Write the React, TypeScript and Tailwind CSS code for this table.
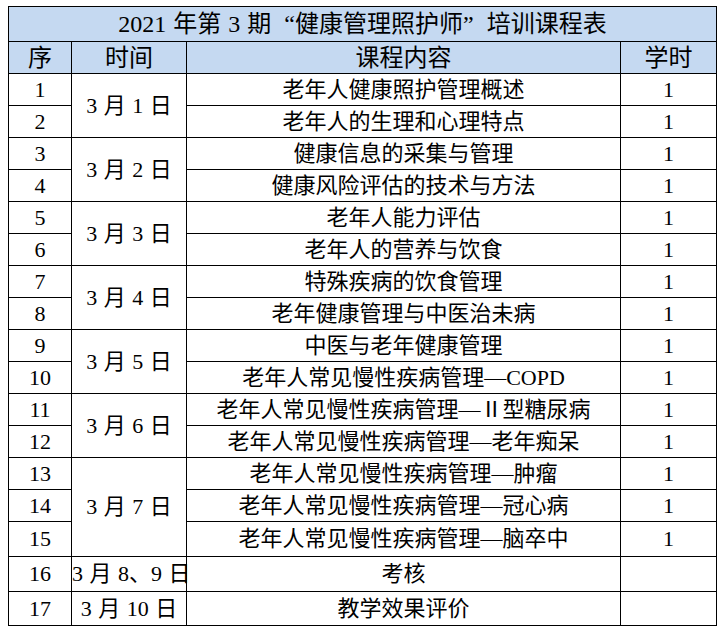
import React from 'react';

type Row = { no: number; date?: string; span?: number; course: string; hours: string; h: string };

const rows: Row[] = [
  { no: 1, date: '3 月 1 日', span: 2, course: '老年人健康照护管理概述', hours: '1', h: 'h-[32px]' },
  { no: 2, course: '老年人的生理和心理特点', hours: '1', h: 'h-[32px]' },
  { no: 3, date: '3 月 2 日', span: 2, course: '健康信息的采集与管理', hours: '1', h: 'h-[32px]' },
  { no: 4, course: '健康风险评估的技术与方法', hours: '1', h: 'h-[32px]' },
  { no: 5, date: '3 月 3 日', span: 2, course: '老年人能力评估', hours: '1', h: 'h-[32px]' },
  { no: 6, course: '老年人的营养与饮食', hours: '1', h: 'h-[32px]' },
  { no: 7, date: '3 月 4 日', span: 2, course: '特殊疾病的饮食管理', hours: '1', h: 'h-[32px]' },
  { no: 8, course: '老年健康管理与中医治未病', hours: '1', h: 'h-[32px]' },
  { no: 9, date: '3 月 5 日', span: 2, course: '中医与老年健康管理', hours: '1', h: 'h-[32px]' },
  { no: 10, course: '老年人常见慢性疾病管理—COPD', hours: '1', h: 'h-[32px]' },
  { no: 11, date: '3 月 6 日', span: 2, course: '老年人常见慢性疾病管理—Ⅱ型糖尿病', hours: '1', h: 'h-[32px]' },
  { no: 12, course: '老年人常见慢性疾病管理—老年痴呆', hours: '1', h: 'h-[32px]' },
  { no: 13, date: '3 月 7 日', span: 3, course: '老年人常见慢性疾病管理—肿瘤', hours: '1', h: 'h-[32px]' },
  { no: 14, course: '老年人常见慢性疾病管理—冠心病', hours: '1', h: 'h-[32px]' },
  { no: 15, course: '老年人常见慢性疾病管理—脑卒中', hours: '1', h: 'h-[35px]' },
  { no: 16, date: '3 月 8、9 日', span: 1, course: '考核', hours: '', h: 'h-[35px]' },
  { no: 17, date: '3 月 10 日', span: 1, course: '教学效果评价', hours: '', h: 'h-[34px]' },
];

const cell = 'border border-black text-center align-middle p-0 leading-none';
const head = `${cell} font-normal text-[24px]`;

export default function App() {
  return (
    <div className="w-[723px] h-[633px] bg-white pt-[6px] pl-[8px] text-black text-[22px] [word-spacing:1px] font-['Liberation_Serif','Noto_Sans_CJK_SC',serif]">
      <table className="table-fixed border-collapse w-[708px]">
        <colgroup>
          <col className="w-[63px]" />
          <col className="w-[115px]" />
          <col className="w-[434px]" />
          <col className="w-[96px]" />
        </colgroup>
        <thead>
          <tr className="h-[35px] bg-[#c5d9f1]">
            <th colSpan={4} className={head}>
              2021 年第 3 期<span className="pl-[13px]">“</span>健康管理照护师<span className="pr-[13px]">”</span>培训课程表
            </th>
          </tr>
          <tr className="h-[32px] bg-[#c5d9f1]">
            <th className={head}>序</th>
            <th className={head}>时间</th>
            <th className={head}>课程内容</th>
            <th className={head}>学时</th>
          </tr>
        </thead>
        <tbody>
          {rows.map((r) => (
            <tr key={r.no} className={r.h}>
              <td className={cell}>{r.no}</td>
              {r.date && (
                <td rowSpan={r.span} className={`${cell} whitespace-nowrap`}>
                  {r.date}
                </td>
              )}
              <td className={cell}>{r.course}</td>
              <td className={cell}>{r.hours}</td>
            </tr>
          ))}
        </tbody>
      </table>
    </div>
  );
}
